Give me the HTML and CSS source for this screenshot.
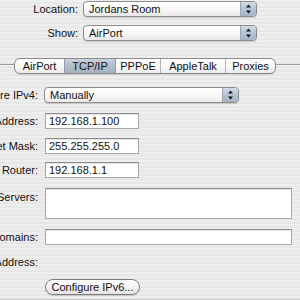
FILE: index.html
```html
<!DOCTYPE html>
<html lang="en">
<head>
  <meta charset="UTF-8">
  <title>Network - TCP/IP</title>
  <link rel="stylesheet" href="styles.css">
</head>
<body>
  <div class="top">
    <div class="top-row">
      <span class="top-label">Location:</span>
      <div class="popup wide">
        <span class="popup-text">Jordans Room</span>
        <span class="stepper"><svg width="7" height="10" viewBox="0 0 7 10"><path d="M3.5 0.5 L6 3.5 H1 Z M3.5 9.5 L6 6.5 H1 Z" fill="#111"/></svg></span>
      </div>
    </div>
    <div class="top-row">
      <span class="top-label">Show:</span>
      <div class="popup wide">
        <span class="popup-text">AirPort</span>
        <span class="stepper"><svg width="7" height="10" viewBox="0 0 7 10"><path d="M3.5 0.5 L6 3.5 H1 Z M3.5 9.5 L6 6.5 H1 Z" fill="#111"/></svg></span>
      </div>
    </div>
  </div>

  <div class="tabbar">
    <div class="tabs">
      <div class="tab t-air">AirPort</div>
      <div class="tab t-tcp active">TCP/IP</div>
      <div class="tab t-ppp">PPPoE</div>
      <div class="tab t-apple">AppleTalk</div>
      <div class="tab t-prox">Proxies</div>
    </div>
  </div>

  <div class="form">
    <div class="row row-ipv4">
      <span class="label">Configure IPv4:</span>
      <div class="popup ipv4">
        <span class="popup-text">Manually</span>
        <span class="stepper"><svg width="7" height="10" viewBox="0 0 7 10"><path d="M3.5 0.5 L6 3.5 H1 Z M3.5 9.5 L6 6.5 H1 Z" fill="#111"/></svg></span>
      </div>
    </div>
    <div class="row row-ip">
      <span class="label">IP Address:</span>
      <div class="field short">192.168.1.100</div>
    </div>
    <div class="row row-mask">
      <span class="label">Subnet Mask:</span>
      <div class="field short">255.255.255.0</div>
    </div>
    <div class="row row-router">
      <span class="label">Router:</span>
      <div class="field short">192.168.1.1</div>
    </div>
    <div class="row row-dns">
      <span class="label">DNS Servers:</span>
      <div class="field long area"></div>
    </div>
    <div class="row row-search">
      <span class="label">Search Domains:</span>
      <div class="field long"></div>
    </div>
    <div class="row row-v6">
      <span class="label">IPv6 Address:</span>
    </div>
    <div class="row row-btn">
      <span class="label"></span>
      <button class="btn">Configure IPv6...</button>
    </div>
  </div>
  <div class="bottom-line"></div>
</body>
</html>
```

FILE: styles.css
```css
body {
  margin: 0;
  width: 300px;
  height: 300px;
  overflow: hidden;
  font-family: "Liberation Sans", Arial, sans-serif;
  font-size: 11px;
  color: #111;
  background: repeating-linear-gradient(#eeeeee 0 2px, #e7e7e7 2px 4px);
}

/* top popups */
.top {
  padding-top: 1px;
  display: flex;
  flex-direction: column;
  gap: 8px;
}

.top-row {
  display: flex;
  align-items: center;
  height: 16px;
}

.top-label {
  width: 78px;
  text-align: right;
  margin-right: 5px;
}

.popup {
  display: flex;
  height: 16px;
  box-sizing: border-box;
  border: 1px solid #8c8c8c;
  border-radius: 4px;
  background: linear-gradient(#ffffff, #f6f6f6 60%, #e9e9e9);
  box-shadow: 0 1px 1px rgba(0,0,0,0.15);
  overflow: hidden;
}

.popup.wide {
  width: 174px;
}

.popup-text {
  flex: 1;
  padding-left: 5px;
  line-height: 14px;
}

.stepper {
  width: 15px;
  border-left: 1px solid #9aa6b4;
  background: linear-gradient(#d4dde7, #b3c0cf 55%, #a7b5c6);
  display: flex;
  align-items: center;
  justify-content: center;
}

/* tabs */
.tabbar {
  margin-top: 17px;
  height: 16px;
  background: linear-gradient(transparent 6px, #9a9a9a 6px, #9a9a9a 7px, #f8f8f8 7px, #f8f8f8 8px, transparent 8px);
}

.tabs {
  display: flex;
  margin-left: 14px;
  width: 262px;
  height: 16px;
  box-sizing: border-box;
  border: 1px solid #8a8a8a;
  border-radius: 6px;
  overflow: hidden;
  background: linear-gradient(#ffffff, #f7f7f7 55%, #ececec);
  box-shadow: 0 1px 1px rgba(0,0,0,0.12);
}

.tab {
  line-height: 14px;
  text-align: center;
  border-left: 1px solid #b2b2b2;
}

.tab:first-child {
  border-left: none;
}

.t-air { width: 49px; }
.t-tcp { width: 50px; }
.t-ppp { width: 44px; }
.t-apple { width: 64px; }
.t-prox { flex: 1; }

.tab.active {
  background: linear-gradient(#c9d2dc, #aebbc9 55%, #a3b1c1);
  border-left-color: #8f9aa6;
}

.tab.active + .tab {
  border-left-color: #8f9aa6;
}

/* form */
.form {
  display: flex;
  flex-direction: column;
}

.row {
  display: flex;
  margin-left: -62px;
}

.label {
  width: 100px;
  flex-shrink: 0;
  text-align: right;
  white-space: nowrap;
  margin-right: 7px;
  line-height: 16px;
}

.row-ipv4 { margin-top: 13px; }
.row-ipv4 .label { margin-right: 6px; }
.row-ip { margin-top: 10px; }
.row-mask { margin-top: 9px; }
.row-router { margin-top: 8px; }
.row-dns { margin-top: 10px; }
.row-dns .label { line-height: 18px; }
.row-search { margin-top: 10px; }
.row-v6 { margin-top: 9px; }
.row-btn { margin-top: 9px; }

.popup.ipv4 {
  width: 195px;
}

.field {
  height: 16px;
  box-sizing: border-box;
  background: #ffffff;
  border: 1px solid #a9a9a9;
  border-top-color: #8a8a8a;
  box-shadow: inset 0 1px 1px rgba(0,0,0,0.12);
  padding-left: 3px;
  line-height: 14px;
}

.field.short {
  width: 94px;
}

.field.long {
  width: 247px;
}

.field.area {
  height: 31px;
}

.btn {
  width: 95px;
  height: 16px;
  padding: 0;
  font-family: "Liberation Sans", Arial, sans-serif;
  font-size: 11px;
  color: #111;
  border: 1px solid #7d7d7d;
  border-radius: 8px;
  background: linear-gradient(#ffffff, #f3f3f3 50%, #e2e2e2);
  box-shadow: 0 1px 1px rgba(0,0,0,0.15);
  line-height: 14px;
}

.bottom-line {
  margin-top: 4px;
  height: 1px;
  background: #c9c9c9;
}
```
